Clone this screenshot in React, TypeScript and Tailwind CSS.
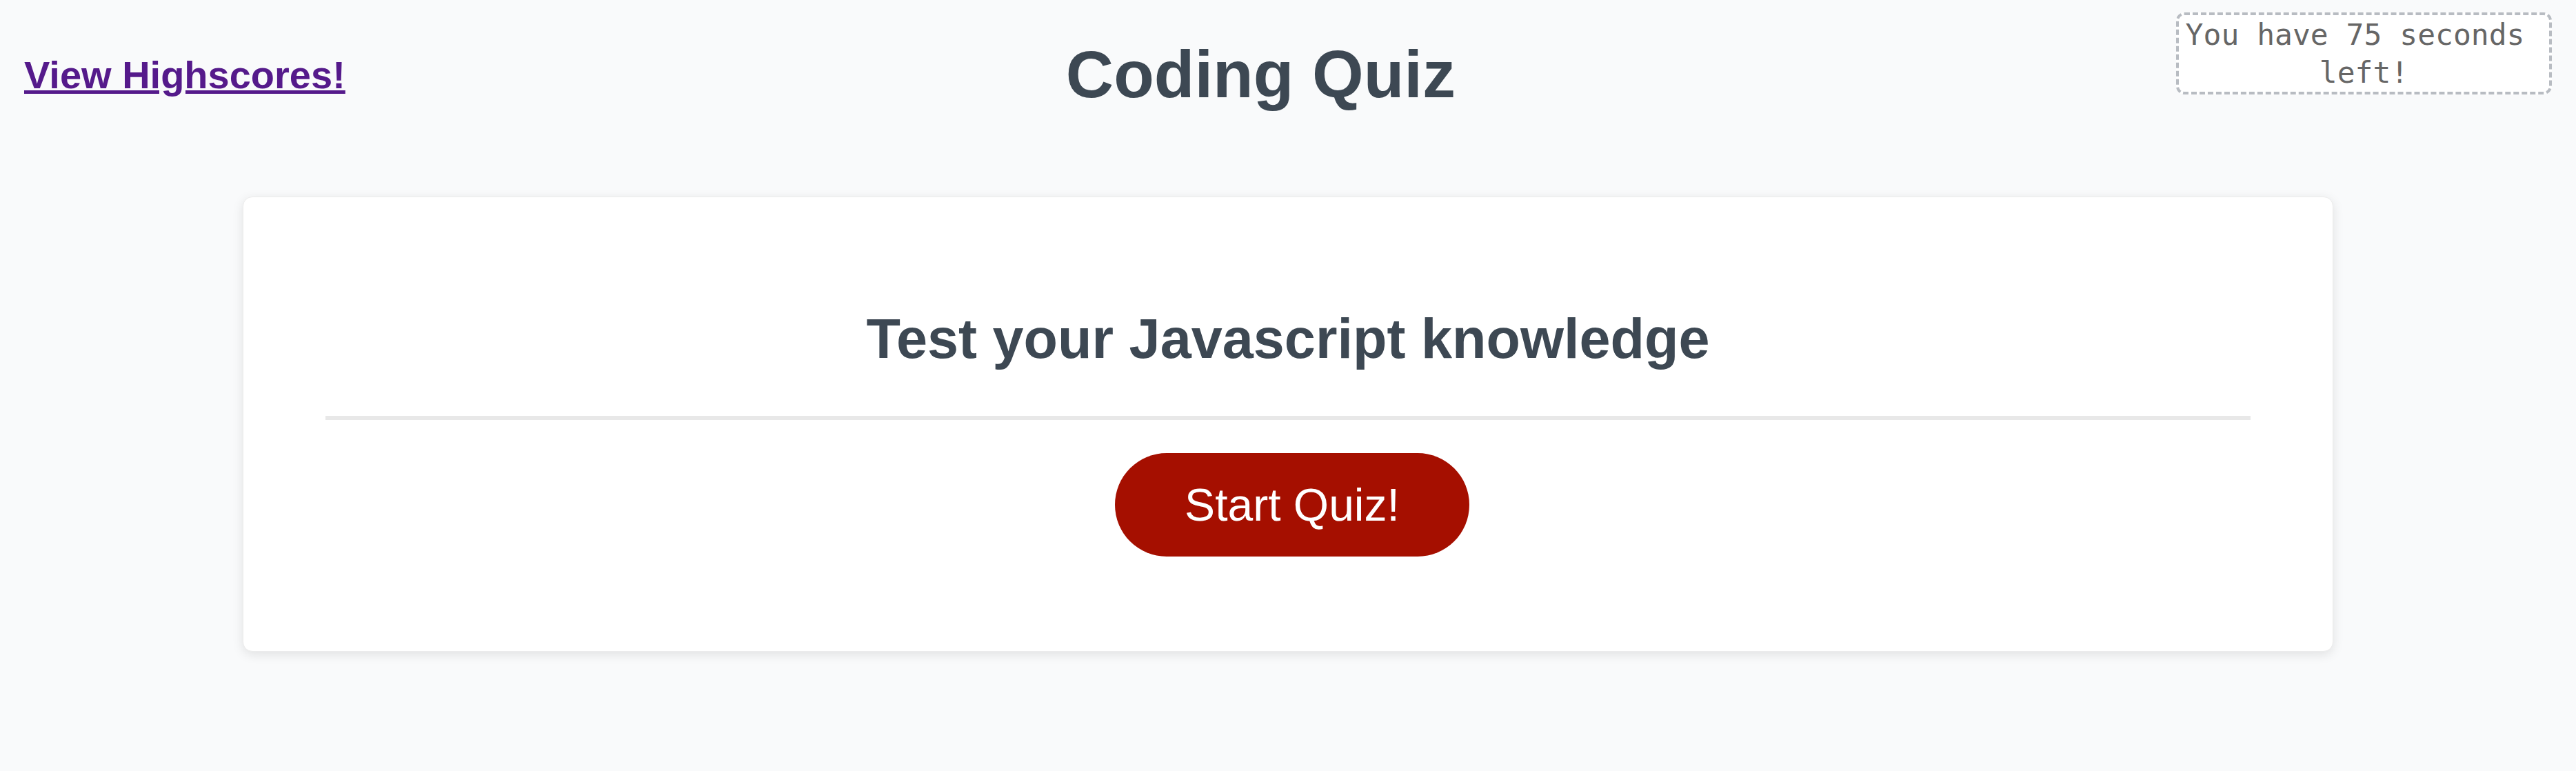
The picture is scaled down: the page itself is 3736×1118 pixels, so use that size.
export default function App() {
  return (
    <div className="min-h-screen bg-[#f9fafb] font-['Liberation_Sans',Arial,sans-serif]">
      {/* Header */}
      <header className="flex justify-between items-start px-[35px]">
        <a
          href="#"
          className="mt-[77px] text-[56px] leading-[64px] font-bold underline text-[#551a8b]"
        >
          View Highscores!
        </a>
        <h1 className="mt-[53px] text-[96px] leading-[110px] font-bold text-[#3d4853]">
          Coding Quiz
        </h1>
        <div className="mt-[18px] w-[545px] border-4 border-dashed border-[#b8bcc2] rounded-[12px] bg-white pt-[1px] px-[6px] text-center whitespace-break-spaces font-['DejaVu_Sans_Mono',monospace] text-[43px] leading-[55px] text-[#666666]">
          You have 75 seconds left!
        </div>
      </header>

      {/* Quiz card */}
      <main className="mt-[122px] w-[3032px] mx-auto bg-white rounded-[14px] border border-[#ececec] shadow-[0_4px_16px_rgba(0,0,0,0.10)] px-[119px] pt-[159px] pb-[137px]">
        <h2 className="text-center text-[81px] leading-[92px] font-bold text-[#3d4853]">
          Test your Javascript knowledge
        </h2>
        <div className="mt-[66px] h-[6px] bg-[#e8e8e8]"></div>
        <div className="mt-[48px] flex justify-center pl-[12px]">
          <button className="w-[514px] h-[150px] rounded-full bg-[#a50f00] text-white text-[66px] flex items-center justify-center">
            Start Quiz!
          </button>
        </div>
      </main>
    </div>
  )
}
